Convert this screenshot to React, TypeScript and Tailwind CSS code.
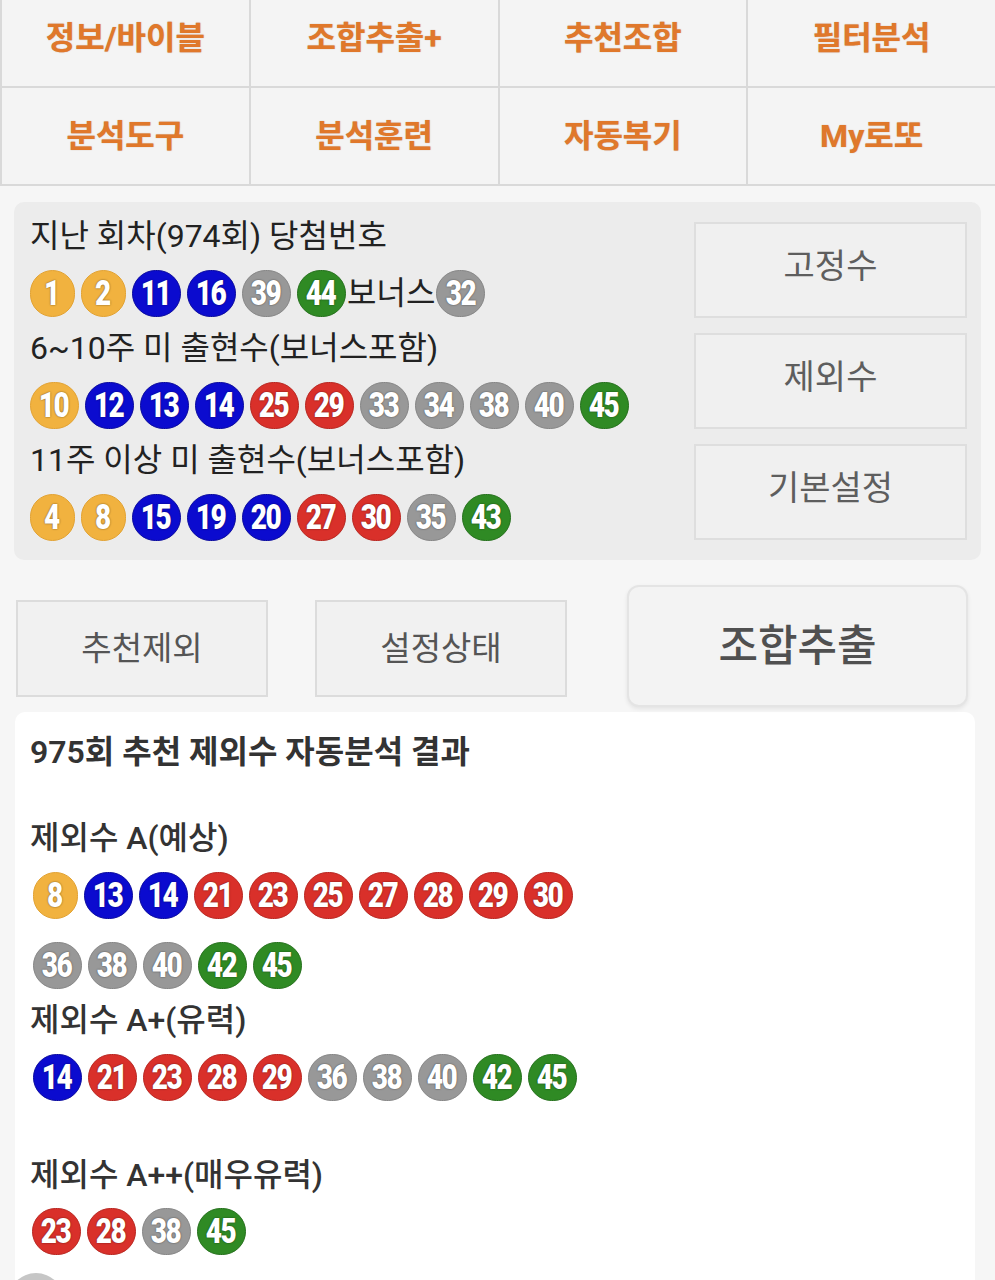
import React from "react";

type C = "y" | "b" | "r" | "g" | "k";

const colorOf = (n: number): C => {
  if (n <= 10) return "y";
  if (n <= 20) return "b";
  if (n <= 30) return "r";
  if (n <= 40) return "k";
  return "g";
};

const bg: Record<C, string> = {
  y: "bg-[#f1b23f] border-[#e2a232]",
  b: "bg-[#0b0bcf] border-[#08089e]",
  r: "bg-[#d9302a] border-[#b8251f]",
  k: "bg-[#989898] border-[#858585]",
  g: "bg-[#2f8a24] border-[#24701b]",
};

function Ball({ n }: { n: number }) {
  const single = n < 10;
  return (
    <span
      className={`inline-flex shrink-0 items-center justify-center rounded-full border ${bg[colorOf(n)]} ${
        single ? "w-[45px]" : "w-[49px]"
      } h-[47px] overflow-hidden text-white font-black text-[35px] leading-none font-['Roboto','Liberation_Sans',sans-serif] [text-shadow:0_0_2px_rgba(0,0,0,0.6)]`}
    >
      <span className="inline-block scale-x-[0.8] tracking-[-2px] pr-[2px]">{n}</span>
    </span>
  );
}

function BallRow({ nums, className = "" }: { nums: number[]; className?: string }) {
  return (
    <div className={`flex items-center gap-[6px] h-[48px] ${className}`}>
      {nums.map((n, i) => (
        <Ball key={i} n={n} />
      ))}
    </div>
  );
}

const navItems = [
  ["정보/바이블", "조합추출+", "추천조합", "필터분석"],
  ["분석도구", "분석훈련", "자동복기", "My로또"],
];

const font = "font-['Roboto','Noto_Sans_CJK_KR',sans-serif]";

export default function App() {
  return (
    <div className={`relative h-[1280px] w-[995px] overflow-hidden bg-[#f6f6f6] ${font}`}>
      {/* Nav grid */}
      <div className="grid grid-cols-4 gap-[2px] bg-[#d9d9d9] pl-[2px] pb-[2px]">
        {navItems.map((row, ri) =>
          row.map((t) => (
            <div
              key={t}
              className={`flex items-center justify-center bg-[#f4f4f4] ${
                ri === 0 ? "h-[86px] pb-[10px]" : "h-[96px]"
              } text-[32px] font-bold text-[#e0782b] [text-shadow:0_0_1px_rgba(150,70,10,0.5)]`}
            >
              {t}
            </div>
          ))
        )}
      </div>

      {/* Info panel */}
      <div className="mx-[14px] mt-[16px] flex rounded-[10px] bg-[#ececec] pl-[16px] pr-[14px] pt-[12px] pb-[19px]">
        <div className="flex-1 text-[#222]">
          <div className="h-[44px] text-[32px] leading-[44px]">지난 회차(974회) 당첨번호</div>
          <div className="mt-[11px] mb-[9px] flex items-center gap-[6px] h-[48px]">
            {[1, 2, 11, 16, 39, 44].map((n) => (
              <Ball key={n} n={n} />
            ))}
            <span className="-mx-[5px] text-[32px] leading-[44px]">보너스</span>
            <Ball n={32} />
          </div>
          <div className="h-[44px] text-[32px] leading-[44px]">6~10주 미 출현수(보너스포함)</div>
          <BallRow className="mt-[11px] mb-[9px]" nums={[10, 12, 13, 14, 25, 29, 33, 34, 38, 40, 45]} />
          <div className="h-[44px] text-[32px] leading-[44px]">11주 이상 미 출현수(보너스포함)</div>
          <BallRow className="mt-[11px]" nums={[4, 8, 15, 19, 20, 27, 30, 35, 43]} />
        </div>
        <div className="flex w-[273px] flex-col gap-[15px] pt-[8px]">
          {["고정수", "제외수", "기본설정"].map((t) => (
            <div
              key={t}
              className="flex h-[96px] items-center justify-center border-2 border-[#dedede] bg-[#f0f0f0] pb-[8px] text-[34px] text-[#5e5e5e]"
            >
              {t}
            </div>
          ))}
        </div>
      </div>

      {/* Action buttons */}
      <div className="mt-[25px] flex items-start">
        <div className="ml-[16px] mt-[15px] flex h-[97px] w-[252px] items-center justify-center border-2 border-[#dcdcdc] bg-[#f1f1f1] text-[33px] text-[#555]">
          추천제외
        </div>
        <div className="ml-[47px] mt-[15px] flex h-[97px] w-[252px] items-center justify-center border-2 border-[#dcdcdc] bg-[#f1f1f1] text-[33px] text-[#555]">
          설정상태
        </div>
        <div className="ml-[60px] flex h-[122px] w-[341px] items-center justify-center rounded-[12px] border-2 border-[#e4e4e4] bg-[#f3f3f3] text-[43px] font-medium text-[#505050] shadow-[0_2px_4px_rgba(0,0,0,0.08)]">
          조합추출
        </div>
      </div>

      {/* Result panel */}
      <div className="ml-[15px] mt-[5px] w-[960px] rounded-t-[10px] bg-white pl-[15px] pt-[18px] pb-[40px] text-[#333]">
        <div className="h-[44px] text-[32px] font-semibold leading-[44px] text-[#333]">
          975회 추천 제외수 자동분석 결과
        </div>
        <div className="mt-[42px] h-[44px] text-[32px] font-medium leading-[44px]">제외수 A(예상)</div>
        <BallRow className="mt-[11px] pl-[3px]" nums={[8, 13, 14, 21, 23, 25, 27, 28, 29, 30]} />
        <BallRow className="mt-[22px] pl-[3px]" nums={[36, 38, 40, 42, 45]} />
        <div className="mt-[9px] h-[44px] text-[32px] font-medium leading-[44px]">제외수 A+(유력)</div>
        <BallRow className="mt-[11px] pl-[3px]" nums={[14, 21, 23, 28, 29, 36, 38, 40, 42, 45]} />
        <div className="mt-[52px] h-[44px] text-[32px] font-medium leading-[44px]">제외수 A++(매우유력)</div>
        <BallRow className="mt-[10px] pl-[2px]" nums={[23, 28, 38, 45]} />
      </div>

      {/* floating circle at bottom left */}
      <div className="absolute left-[8px] top-[1273px] h-[56px] w-[56px] rounded-full bg-[#c6c6c6]" />
    </div>
  );
}
